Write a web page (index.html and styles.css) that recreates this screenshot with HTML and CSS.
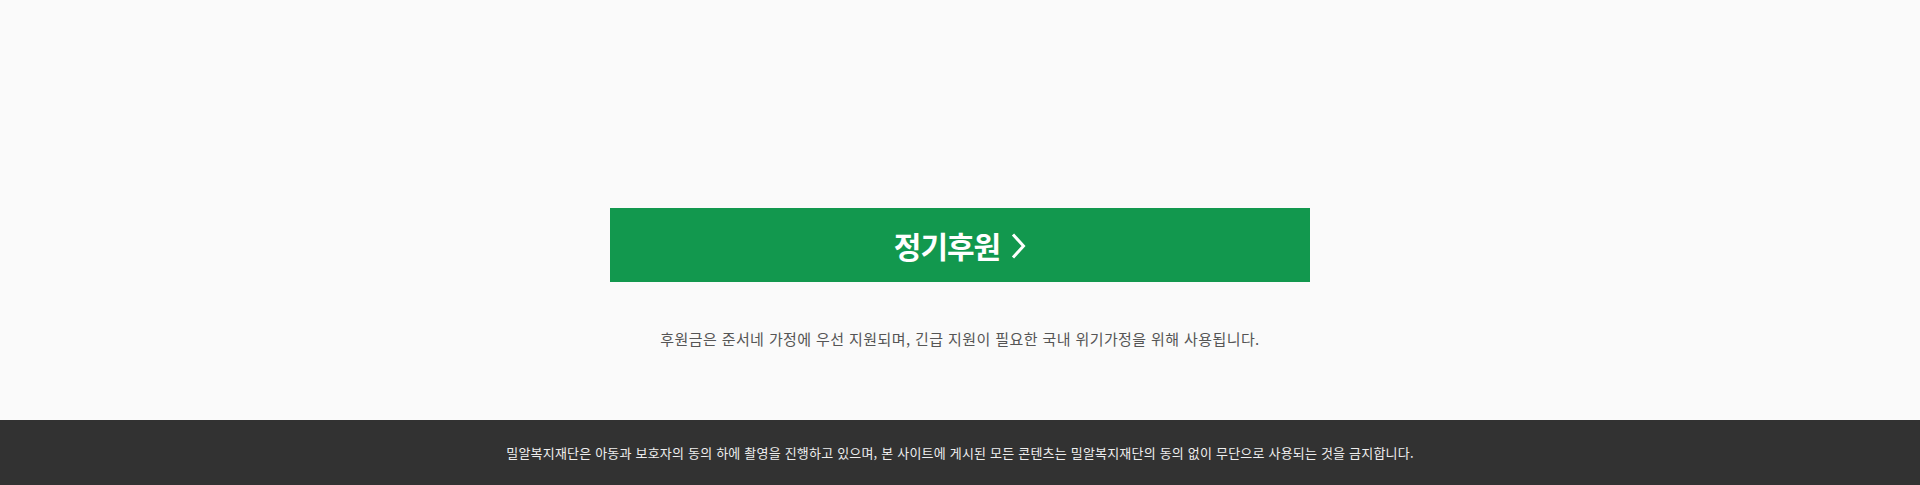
FILE: index.html
```html
<!DOCTYPE html>
<html lang="ko">
<head>
    <meta charset="UTF-8">
    <meta name="viewport" content="width=device-width, initial-scale=1.0">
    <title>정기후원</title>
    <link rel="stylesheet" href="styles.css">
</head>
<body>
    <!-- Donate Section -->
    <div class="donate">
        <a class="donate-button" href="#">
            <span class="donate-label">정기후원</span>
            <svg class="chevron" width="15" height="26" viewBox="0 0 15 26">
                <path d="M2 1.5 L12.5 13 L2 24.5" fill="none" stroke="#fff" stroke-width="3"/>
            </svg>
        </a>
        <p class="donate-note">후원금은 준서네 가정에 우선 지원되며, 긴급 지원이 필요한 국내 위기가정을 위해 사용됩니다.</p>
    </div>

    <!-- Footer -->
    <div class="footer">
        <p class="footer-text">밀알복지재단은 아동과 보호자의 동의 하에 촬영을 진행하고 있으며, 본 사이트에 게시된 모든 콘텐츠는 밀알복지재단의 동의 없이 무단으로 사용되는 것을 금지합니다.</p>
    </div>
</body>
</html>
```

FILE: styles.css
```css
/* --- GENERAL STYLING --- */
body {
    margin: 0;
    background-color: #fafafa;
    font-family: "Noto Sans CJK KR", "Noto Sans", sans-serif;
}

/* --- DONATE SECTION --- */
.donate {
    height: 420px;
    box-sizing: border-box;
    padding-top: 208px;
    display: flex;
    flex-direction: column;
    align-items: center;
}

.donate-button {
    width: 700px;
    height: 74px;
    background: #12984e;
    display: flex;
    justify-content: center;
    align-items: center;
    gap: 11px;
    text-decoration: none;
    color: #fff;
}

.donate-label {
    font-size: 30px;
    font-weight: bold;
    letter-spacing: -1px;
    line-height: 1;
}

.chevron {
    display: block;
    margin-top: 1px;
}

.donate-note {
    margin: 45px 0 0;
    font-size: 15px;
    line-height: 24px;
    letter-spacing: 0.4px;
    color: #555;
}

/* --- FOOTER --- */
.footer {
    height: 65px;
    background: #323232;
    display: flex;
    justify-content: center;
    align-items: center;
}

.footer-text {
    margin: 0;
    font-size: 13px;
    line-height: 20px;
    letter-spacing: 0.2px;
    color: #eee;
}
```
